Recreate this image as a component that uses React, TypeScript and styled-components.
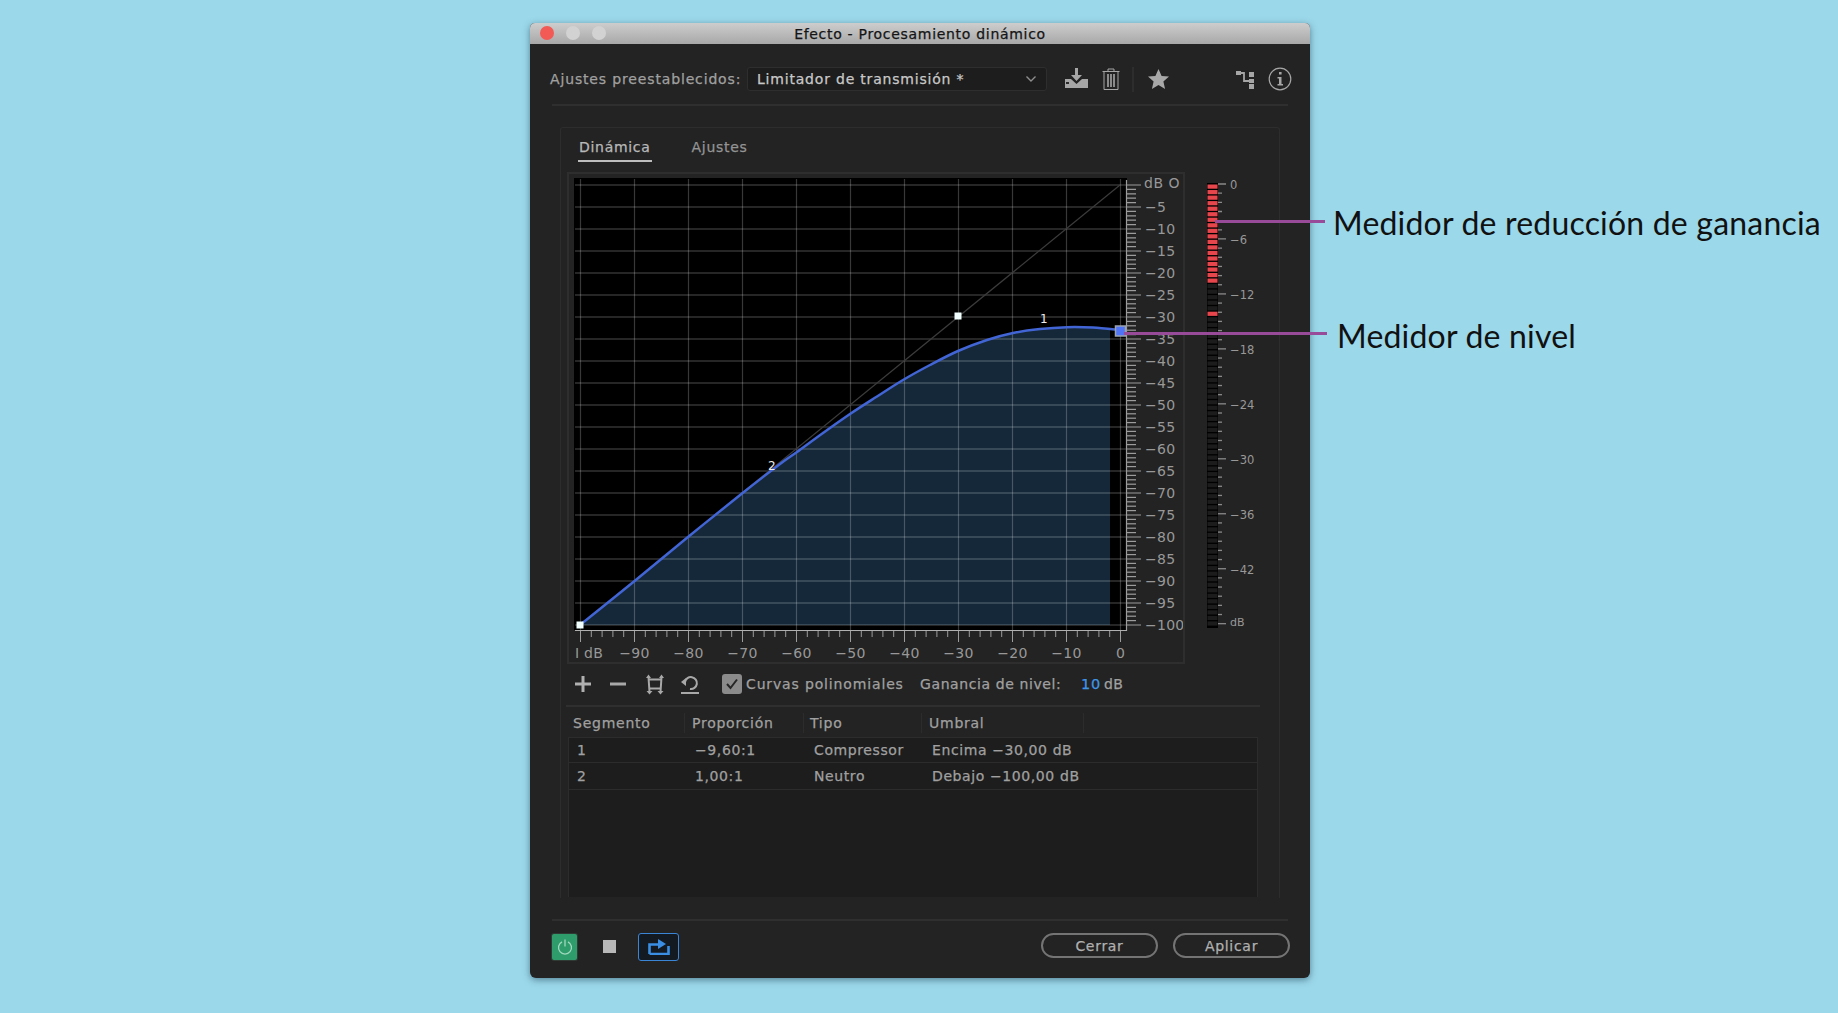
import React from "react";
import styled, { createGlobalStyle } from "styled-components";

const UI = `"DejaVu Sans", "Liberation Sans", sans-serif`;

const Global = createGlobalStyle`
  html, body { margin: 0; padding: 0; background: #9bd8ea; }
  * { box-sizing: border-box; }
`;

const Page = styled.div`
  position: relative;
  width: 1838px;
  height: 1013px;
  overflow: hidden;
  padding: 23px 0 0 530px;
  background: #9bd8ea;
  font-family: ${UI};
`;

const Win = styled.div`
  width: 780px;
  height: 955px;
  background: #232323;
  border-radius: 5px 5px 6px 6px;
  box-shadow: 0 2px 7px rgba(30, 60, 80, 0.55);
  display: flex;
  flex-direction: column;
  overflow: hidden;
  -webkit-text-stroke: 0.25px currentColor;
`;

const TitleBar = styled.div`
  position: relative;
  height: 21px;
  flex: none;
  background: linear-gradient(#cdcdcd, #a8a8a8);
  display: flex;
  align-items: center;
  justify-content: center;
  color: #151515;
  font-size: 14px;
  letter-spacing: 0.7px;
`;

const Lights = styled.div`
  position: absolute;
  left: 10px;
  top: 3px;
  display: flex;
  gap: 12px;
`;

const Light = styled.span<{ $c: string }>`
  width: 14px;
  height: 14px;
  border-radius: 50%;
  background: ${(p) => p.$c};
`;

const Body = styled.div`
  flex: 1;
  padding: 0 22px;
  display: flex;
  flex-direction: column;
`;

const Toolbar = styled.div`
  height: 62px;
  flex: none;
  padding-top: 23px;
  padding-bottom: 13px;
  border-bottom: 2px solid #2f2f2f;
  display: flex;
  align-items: center;
`;

const PresetLabel = styled.span`
  width: 197px;
  flex: none;
  margin-left: -2px;
  color: #a0a0a0;
  font-size: 14px;
  letter-spacing: 0.85px;
  white-space: nowrap;
`;

const Select = styled.div`
  width: 300px;
  height: 24px;
  flex: none;
  background: #1d1d1d;
  border: 1px solid #2e2e2e;
  border-radius: 3px;
  padding: 0 9px;
  display: flex;
  align-items: center;
  justify-content: space-between;
  color: #c8c8c8;
  font-size: 14px;
  letter-spacing: 0.8px;
`;

const ToolIcon = styled.svg<{ $ml: number }>`
  flex: none;
  margin-left: ${(p) => p.$ml}px;
  display: block;
`;

const VSep = styled.span`
  width: 2px;
  height: 25px;
  flex: none;
  margin-left: 12px;
  background: #2d2d2d;
`;

const Panel = styled.div`
  width: 720px;
  height: 771px;
  flex: none;
  margin: 21px 0 0 8px;
  padding: 0 0 0 6px;
  border: 1px solid #2d2d2d;
  border-bottom: none;
  border-radius: 3px 3px 0 0;
  display: flex;
  flex-direction: column;
`;

const Tabs = styled.div`
  height: 44px;
  flex: none;
  display: flex;
  padding-left: 11px;
  gap: 39px;
`;

const Tab = styled.div<{ $active?: boolean }>`
  height: 34px;
  padding: 11px 1px 0;
  font-size: 14px;
  letter-spacing: 0.7px;
  color: ${(p) => (p.$active ? "#b8b8b8" : "#949494")};
  border-bottom: 2px solid ${(p) => (p.$active ? "#bdbdbd" : "transparent")};
`;

const ChartRow = styled.div`
  display: flex;
  flex: none;
  height: 492px;
`;

const ChartFrame = styled.div`
  width: 618px;
  height: 492px;
  flex: none;
  border: 2px solid #2e2e2e;
`;

const MeterBox = styled.div`
  margin: 6px 0 0 15px;
`;

const Block = styled.svg`
  display: block;
`;

const ChartText = styled.text<{ $size?: number; $sp?: number }>`
  font-family: ${UI};
  font-size: ${(p) => p.$size ?? 14}px;
  letter-spacing: ${(p) => p.$sp ?? 0.25}px;
  fill: #989898;
  -webkit-text-stroke: 0.25px #989898;
`;

const CurveTools = styled.div`
  height: 43px;
  width: 694px;
  flex: none;
  margin-left: -1px;
  border-bottom: 2px solid #2f2f2f;
  display: flex;
  align-items: center;
  padding-bottom: 1px;
`;

const CheckBox = styled.span`
  width: 20px;
  height: 20px;
  flex: none;
  margin-left: 22px;
  border-radius: 3px;
  background: #8b8b8b;
  display: flex;
  align-items: center;
  justify-content: center;
`;

const CheckLabel = styled.span`
  margin-left: 4px;
  width: 174px;
  flex: none;
  color: #a0a0a0;
  font-size: 14px;
  letter-spacing: 0.85px;
  white-space: nowrap;
`;

const GainLabel = styled.span`
  width: 161px;
  flex: none;
  color: #a0a0a0;
  font-size: 14px;
  letter-spacing: 0.6px;
  white-space: nowrap;
`;

const GainValue = styled.span`
  color: #3f96e6;
  font-size: 14.5px;
  letter-spacing: 0.8px;
`;

const GainUnit = styled.span`
  margin-left: 3px;
  color: #a0a0a0;
  font-size: 14px;
  letter-spacing: 0.4px;
`;

const COLS = "117px 119px 118px 162px 174px";

const HeadRow = styled.div`
  height: 30px;
  flex: none;
  margin-left: 1px;
  width: 690px;
  display: grid;
  grid-template-columns: ${COLS};
  align-items: center;
  padding-top: 1px;
`;

const HeadCell = styled.div<{ $pl: number; $sep?: boolean }>`
  height: 20px;
  padding-left: ${(p) => p.$pl}px;
  line-height: 20px;
  color: #a0a0a0;
  font-size: 14px;
  letter-spacing: 0.75px;
  border-right: ${(p) => (p.$sep ? "1px solid #2c2c2c" : "none")};
`;

const TableBody = styled.div`
  width: 690px;
  height: 160px;
  flex: none;
  margin-left: 1px;
  background: #1d1d1d;
  border-top: 1px solid #2c2c2c;
  border-left: 1px solid #2c2c2c;
  border-right: 1px solid #2c2c2c;
`;

const DataRow = styled.div<{ $h: number }>`
  height: ${(p) => p.$h}px;
  display: grid;
  grid-template-columns: ${COLS};
  align-items: center;
  border-bottom: 1px solid #2c2c2c;
`;

const DataCell = styled.div<{ $pl: number }>`
  padding-left: ${(p) => p.$pl}px;
  color: #a0a0a0;
  font-size: 14px;
  letter-spacing: 0.6px;
  white-space: nowrap;
`;

const FooterRule = styled.div`
  height: 2px;
  flex: none;
  margin-top: 21px;
  background: #2f2f2f;
`;

const Footer = styled.div`
  display: flex;
  align-items: flex-start;
  margin-top: 12px;
`;

const PowerBtn = styled.div`
  width: 25px;
  height: 26px;
  margin-top: 1px;
  background: #2f9c6c;
  border-radius: 2px;
  box-shadow: 0 0 0 1px #2f3a34;
  display: flex;
  align-items: center;
  justify-content: center;
`;

const StopBtn = styled.div`
  width: 13px;
  height: 13px;
  margin: 7px 0 0 26px;
  background: #b8b8b8;
`;

const LoopBtn = styled.div`
  width: 41px;
  height: 28px;
  margin-left: 22px;
  background: #141a22;
  border: 1.5px solid #3a85d6;
  border-radius: 3px;
  display: flex;
  align-items: center;
  justify-content: center;
`;

const Spacer = styled.div`
  flex: 1;
`;

const Pills = styled.div`
  display: flex;
  gap: 15px;
  margin-right: -2px;
`;

const Pill = styled.div`
  width: 117px;
  height: 25px;
  border: 2px solid #747474;
  border-radius: 13px;
  display: flex;
  align-items: center;
  justify-content: center;
  color: #b0b0b0;
  font-size: 14px;
  letter-spacing: 0.7px;
`;

const CalloutLine = styled.div<{ $l: number; $t: number; $w: number }>`
  position: absolute;
  left: ${(p) => p.$l}px;
  top: ${(p) => p.$t}px;
  width: ${(p) => p.$w}px;
  height: 2.5px;
  background: #974b98;
`;

const CalloutText = styled.div<{ $l: number; $t: number }>`
  position: absolute;
  left: ${(p) => p.$l}px;
  top: ${(p) => p.$t}px;
  color: #111;
  font-family: "Lato", "Open Sans", sans-serif;
  font-size: 32px;
  letter-spacing: 0.19px;
  line-height: 38px;
  white-space: nowrap;
`;

const range = (n: number) => Array.from({ length: n }, (_, i) => i);

const curvePts: [number, number][] = [
  [580, 625], [634, 581.5], [688, 537], [742, 493.5], [780, 464], [797, 452],
  [823, 433], [850, 414], [877, 396.5], [903, 380], [930, 365], [958, 351],
  [987, 340], [1013, 333], [1040, 329], [1067, 327.2], [1093, 327.6], [1120, 330],
];

function smooth(pts: [number, number][]) {
  let d = `M${pts[0][0]} ${pts[0][1]}`;
  for (let i = 0; i < pts.length - 1; i++) {
    const p0 = pts[Math.max(0, i - 1)];
    const p1 = pts[i];
    const p2 = pts[i + 1];
    const p3 = pts[Math.min(pts.length - 1, i + 2)];
    const c1x = p1[0] + (p2[0] - p0[0]) / 6;
    const c1y = p1[1] + (p2[1] - p0[1]) / 6;
    const c2x = p2[0] - (p3[0] - p1[0]) / 6;
    const c2y = p2[1] - (p3[1] - p1[1]) / 6;
    d += ` C${c1x} ${c1y} ${c2x} ${c2y} ${p2[0]} ${p2[1]}`;
  }
  return d;
}

const Chart = () => {
  const curve = smooth(curvePts);
  return (
    <Block width={614} height={488} viewBox="569 174 614 488">
      <defs>
        <clipPath id="fillClip">
          <rect x={574} y={178} width={536} height={447} />
        </clipPath>
      </defs>
      <rect x={574} y={178} width={553} height={452} fill="#000" />
      <path d={`${curve} L1120 625 Z`} fill="#15283a" clipPath="url(#fillClip)" />
      {range(21).map((i) => (
        <line key={i} x1={575} x2={1126} y1={185 + i * 22} y2={185 + i * 22} stroke="#fff" strokeOpacity={0.2} strokeWidth={1.3} />
      ))}
      {range(11).map((i) => (
        <line key={i} x1={580.5 + i * 54} x2={580.5 + i * 54} y1={179} y2={630} stroke="#fff" strokeOpacity={0.22} strokeWidth={1.2} />
      ))}
      <line x1={580} y1={625} x2={1120} y2={185} stroke="#3c3c3c" strokeWidth={1.2} />
      <path d={curve} fill="none" stroke="#4265d6" strokeWidth={2.5} />
      <rect x={954.5} y={312.5} width={7} height={7} fill="#f2ffff" />
      <rect x={576.5} y={621.5} width={7} height={7} fill="#f2ffff" />
      <rect x={1115.5} y={326} width={10} height={10} fill="#4f74f5" stroke="#9aa2b0" strokeWidth={1.5} />
      <ChartText x={1040} y={323} $size={12} $sp={0} style={{ fill: "#eee" }}>1</ChartText>
      <ChartText x={768} y={470} $size={12} $sp={0} style={{ fill: "#eee" }}>2</ChartText>

      <line x1={1126.5} x2={1126.5} y1={180} y2={631} stroke="#9c9c9c" strokeWidth={1.2} />
      <line x1={575} x2={1127} y1={630.5} y2={630.5} stroke="#b0b0b0" strokeWidth={1.2} />
      {range(101).map((i) => {
        const major = i % 5 === 0;
        const y = 185 + i * 4.4;
        return <line key={i} x1={1127} x2={major ? 1141 : 1136} y1={y} y2={y} stroke="#9c9c9c" strokeWidth={major ? 1 : 1.2} />;
      })}
      {range(51).map((i) => {
        const major = i % 5 === 0;
        const x = 580.5 + i * 10.8;
        return <line key={i} x1={x} x2={x} y1={631} y2={major ? 642 : 637} stroke="#9c9c9c" strokeWidth={1} />;
      })}
      <ChartText x={1144} y={188} $sp={0.5}>dB O</ChartText>
      {range(20).map((i) => (
        <ChartText key={i} x={1145} y={212 + i * 22}>{`−${(i + 1) * 5}`}</ChartText>
      ))}
      <ChartText x={575} y={658}>I dB</ChartText>
      {range(10).map((i) => (
        <ChartText key={i} x={634.5 + i * 54} y={658} textAnchor="middle">
          {i === 9 ? "0" : `−${90 - i * 10}`}
        </ChartText>
      ))}
    </Block>
  );
};

const Meter = () => (
  <Block width={70} height={455} viewBox="1200 178 70 455">
    <rect x={1207} y={183} width={11} height={445} fill="#000" />
    {range(80).map((i) => {
      const red = i < 18 || i === 23;
      return <rect key={i} x={1207.5} y={184.5 + i * 5.53} width={10} height={4.2} fill={red ? "#e8464d" : "#1c1c1c"} />;
    })}
    {range(49).map((i) => {
      const major = i % 6 === 0;
      const y = 184 + i * 9.16;
      return <line key={i} x1={1218} x2={major ? 1226 : 1222} y1={y} y2={y} stroke="#8a8a8a" strokeWidth={1.3} />;
    })}
    {["0", "−6", "−12", "−18", "−24", "−30", "−36", "−42"].map((t, i) => (
      <ChartText key={t} x={1230} y={189 + i * 54.96} $size={11.5} $sp={0}>{t}</ChartText>
    ))}
    <ChartText x={1230} y={626} $size={11} $sp={0}>dB</ChartText>
  </Block>
);

export default function App() {
  return (
    <>
      <Global />
      <Page>
        <Win>
          <TitleBar>
            <Lights>
              <Light $c="#f25a55" />
              <Light $c="#d2d2d2" />
              <Light $c="#d2d2d2" />
            </Lights>
            Efecto - Procesamiento dinámico
          </TitleBar>
          <Body>
            <Toolbar>
              <PresetLabel>Ajustes preestablecidos:</PresetLabel>
              <Select>
                <span>Limitador de transmisión *</span>
                <svg width="12" height="8" viewBox="0 0 12 8">
                  <path d="M1.5 1.5 L6 6 L10.5 1.5" fill="none" stroke="#8e8e8e" strokeWidth="1.4" />
                </svg>
              </Select>
              <ToolIcon $ml={18} width={23} height={22} viewBox="0 0 23 22">
                <path d="M10 0h3v7h4l-5.500 6L6 7h4z" fill="#a6a6a6" />
                <path d="M0 11h6l5.500 5 5.500-5h6v9H0z" fill="#a6a6a6" />
                <rect x="1" y="14" width="3" height="2" fill="#2a2a2a" />
              </ToolIcon>
              <ToolIcon $ml={14} width={18} height={22} viewBox="0 0 18 22">
                <path d="M.5 3.500h17M6 3.500V1h6v2.500M2 3.500h14v18H2z" fill="none" stroke="#a6a6a6" strokeWidth="1" />
                <path d="M6 6v13M9 6v13M12 6v13" stroke="#a6a6a6" strokeWidth="1.600" />
              </ToolIcon>
              <VSep />
              <ToolIcon $ml={14} width={21} height={21} viewBox="0 0 21 21">
                <path d="M10.500 0l3.100 7 7.400.6-5.600 4.900 1.700 7.500-6.600-4-6.600 4 1.700-7.500L0 7.600 7.400 7z" fill="#a8a8a8" />
              </ToolIcon>
              <ToolIcon $ml={67} width={19} height={19} viewBox="0 0 19 19">
                <path d="M0 1h5v4H0zM13 2h5v5h-5zM13 9h5v4h-5zM13 14h5v5h-5z" fill="#a6a6a6" />
                <path d="M4 3h4v8h5" fill="none" stroke="#a6a6a6" strokeWidth="1.800" />
              </ToolIcon>
              <ToolIcon $ml={13} width={24} height={24} viewBox="0 0 24 24" style={{ marginRight: -3 }}>
                <circle cx="12" cy="12" r="10.800" fill="none" stroke="#a6a6a6" strokeWidth="1.200" />
                <path d="M11 5h2.600v2.600H11zM9.500 10H13.500v7h1.500v1.500H9.500V17H11v-5.500H9.500z" fill="#a6a6a6" />
              </ToolIcon>
            </Toolbar>
            <Panel>
              <Tabs>
                <Tab $active>Dinámica</Tab>
                <Tab>Ajustes</Tab>
              </Tabs>
              <ChartRow>
                <ChartFrame>
                  <Chart />
                </ChartFrame>
                <MeterBox>
                  <Meter />
                </MeterBox>
              </ChartRow>
              <CurveTools>
                <ToolIcon $ml={9} width={16} height={16} viewBox="0 0 16 16">
                  <path d="M6.500 0h3v6.500H16v3H9.500V16h-3V9.500H0v-3h6.500z" fill="#b0b0b0" />
                </ToolIcon>
                <ToolIcon $ml={19} width={16} height={16} viewBox="0 0 16 16">
                  <rect x="0" y="6.500" width="16" height="3" fill="#a8a8a8" />
                </ToolIcon>
                <ToolIcon $ml={19} width={20} height={21} viewBox="0 0 20 21">
                  <path d="M3.500 3l1 15M16.500 3l-1 15" stroke="#a8a8a8" strokeWidth="2" />
                  <path d="M3 5.500h14M4 14.500h12" stroke="#a8a8a8" strokeWidth="1.800" />
                  <path d="M1 4L3.500 .5 6 4zM14 4L16.500 .5 19 4zM1.500 17L4.500 20.500 7.500 17zM12.500 17L15.500 20.500 18.500 17z" fill="#a8a8a8" />
                </ToolIcon>
                <ToolIcon $ml={15} width={20} height={19} viewBox="0 0 20 19">
                  <path d="M5 7a6 6 0 1 1 5 7" fill="none" stroke="#a8a8a8" strokeWidth="2" />
                  <path d="M1 7l5-4v8z" fill="#a8a8a8" />
                  <rect x="1" y="17" width="18" height="2" fill="#a8a8a8" />
                </ToolIcon>
                <CheckBox>
                  <svg width="14" height="12" viewBox="0 0 14 12">
                    <path d="M2 6l3.500 4L12 1.500" fill="none" stroke="#262626" strokeWidth="2" />
                  </svg>
                </CheckBox>
                <CheckLabel>Curvas polinomiales</CheckLabel>
                <GainLabel>Ganancia de nivel:</GainLabel>
                <GainValue>10</GainValue>
                <GainUnit>dB</GainUnit>
              </CurveTools>
              <HeadRow>
                <HeadCell $pl={5} $sep>Segmento</HeadCell>
                <HeadCell $pl={7} $sep>Proporción</HeadCell>
                <HeadCell $pl={6} $sep>Tipo</HeadCell>
                <HeadCell $pl={7} $sep>Umbral</HeadCell>
                <HeadCell $pl={0} />
              </HeadRow>
              <TableBody>
                <DataRow $h={25}>
                  <DataCell $pl={8}>1</DataCell>
                  <DataCell $pl={9}>−9,60:1</DataCell>
                  <DataCell $pl={9}>Compressor</DataCell>
                  <DataCell $pl={9}>Encima −30,00 dB</DataCell>
                </DataRow>
                <DataRow $h={27}>
                  <DataCell $pl={8}>2</DataCell>
                  <DataCell $pl={9}>1,00:1</DataCell>
                  <DataCell $pl={9}>Neutro</DataCell>
                  <DataCell $pl={9}>Debajo −100,00 dB</DataCell>
                </DataRow>
              </TableBody>
            </Panel>
            <FooterRule />
            <Footer>
              <PowerBtn>
                <svg width="16" height="16" viewBox="0 0 16 16">
                  <path d="M5 2.800a6.500 6.500 0 1 0 6 0M8 .5v7" fill="none" stroke="#9fd8bd" strokeWidth="1.300" />
                </svg>
              </PowerBtn>
              <StopBtn />
              <LoopBtn>
                <svg width="22" height="16" viewBox="0 0 22 16">
                  <path d="M1.500 15V5.500H11M20.500 7v8H1.500" fill="none" stroke="#3a8fe4" strokeWidth="2.600" />
                  <path d="M10 0l8 5-8 5z" fill="#3a8fe4" />
                </svg>
              </LoopBtn>
              <Spacer />
              <Pills>
                <Pill>Cerrar</Pill>
                <Pill>Aplicar</Pill>
              </Pills>
            </Footer>
          </Body>
        </Win>
        <CalloutLine $l={1215} $t={220} $w={110} />
        <CalloutLine $l={1124} $t={332} $w={203} />
        <CalloutText $l={1333} $t={204}>Medidor de reducción de ganancia</CalloutText>
        <CalloutText $l={1337} $t={317}>Medidor de nivel</CalloutText>
      </Page>
    </>
  );
}
